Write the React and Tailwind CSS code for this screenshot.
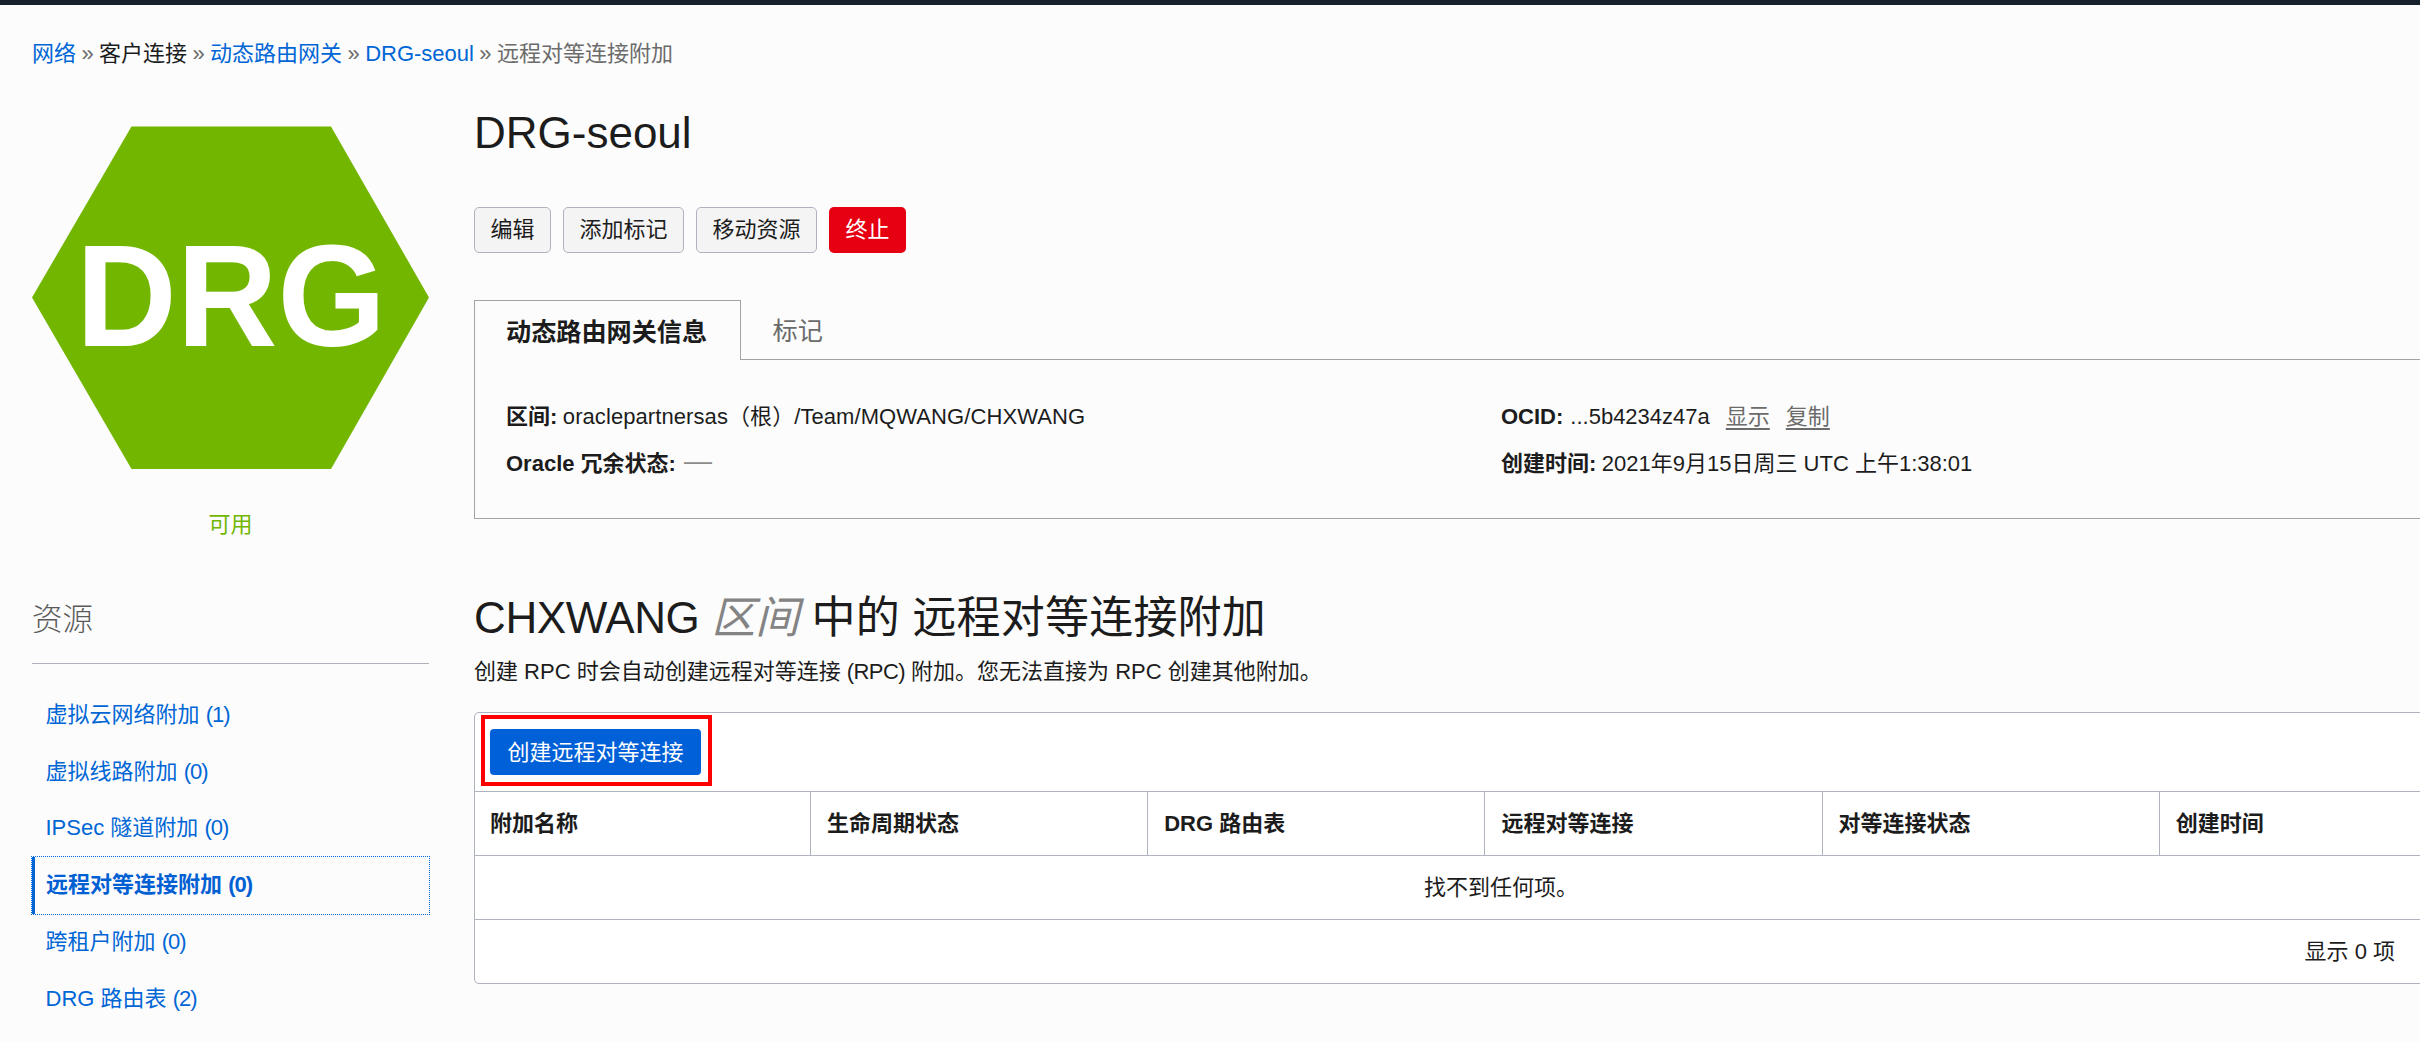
const RESOURCES = [
  { label: '虚拟云网络附加', count: 1 },
  { label: '虚拟线路附加', count: 0 },
  { label: 'IPSec 隧道附加', count: 0 },
  { label: '远程对等连接附加', count: 0, active: true },
  { label: '跨租户附加', count: 0 },
  { label: 'DRG 路由表', count: 2 },
];

const COLUMNS = ['附加名称', '生命周期状态', 'DRG 路由表', '远程对等连接', '对等连接状态', '创建时间'];

const ACTIONS = ['编辑', '添加标记', '移动资源'];

function Breadcrumb() {
  const sep = <span className="text-[#6b6b6b]">»</span>;
  return (
    <nav className="flex h-[34px] items-center gap-[5.4px] px-8 leading-[34px] whitespace-nowrap">
      <a className="text-[#0066d6]">网络</a>
      {sep}
      <span>客户连接</span>
      {sep}
      <a className="text-[#0066d6]">动态路由网关</a>
      {sep}
      <a className="text-[#0066d6]">DRG-seoul</a>
      {sep}
      <span className="text-[#6b6b6b]">远程对等连接附加</span>
    </nav>
  );
}

function ResourceLabel({ label, count }) {
  return (
    <span className="whitespace-pre">
      {label} <span className="tracking-[-1px]">({count})</span>
    </span>
  );
}

function Sidebar() {
  return (
    <aside className="w-[397px] shrink-0 pt-[55px]">
      <svg className="block" width="397" height="343" viewBox="0 0 397 343">
        <path d="M99.5 0.5H299L397 171.5L299 343H99.5L0 171.5Z" fill="#72b600" />
        <text
          x="44"
          y="220"
          fill="#fff"
          fontSize="144"
          fontWeight="700"
          textLength="310"
          lengthAdjust="spacingAndGlyphs"
          fontFamily="'Liberation Sans', Arial, sans-serif"
        >
          DRG
        </text>
      </svg>
      <div className="mt-[39px] text-center leading-[34px] text-[#72b600]">可用</div>
      <h2 className="mt-[56px] h-[66px] border-b border-[#aeb3bb] text-[30.5px] leading-[42px] font-light text-[#5a5a5a]">
        资源
      </h2>
      <ul className="mt-[22.5px]">
        {RESOURCES.map((r) =>
          r.active ? (
            <li
              key={r.label}
              className="-mx-px flex h-[59px] -my-px items-center border border-dotted border-[#0066d6]"
            >
              <span className="h-full w-[3px] bg-[#0066d6]" />
              <span className="pl-[11px] font-bold text-[#0060d3]">
                <ResourceLabel {...r} />
              </span>
            </li>
          ) : (
            <li key={r.label} className="flex h-[56.8px] items-center pl-[13.5px] text-[#0066d6]">
              <ResourceLabel {...r} />
            </li>
          ),
        )}
      </ul>
    </aside>
  );
}

function InfoPanel() {
  return (
    <section className="mt-[47px]">
      <div className="flex h-[60px] text-[25.15px] leading-[62px]">
        <div className="w-[267px] border-x border-t border-[#a3a3a3] pl-[31px] font-bold">动态路由网关信息</div>
        <div className="flex-1 border-b border-[#a3a3a3] pl-[31.5px] text-[#6b6b6b]">标记</div>
      </div>
      <div className="flex h-[159px] border-b border-l border-[#a3a3a3] pt-[33px] pl-[31px] leading-[47px]">
        <div className="w-[995px]">
          <div>
            <b>区间:</b>
            <span className="ml-[5.5px] tracking-[0.08px]">oraclepartnersas（根）/Team/MQWANG/CHXWANG</span>
          </div>
          <div className="flex">
            <b>Oracle 冗余状态:</b>
            <span className="relative -top-[3px] ml-[8px] text-[28px] text-[#8a8a8a]">—</span>
          </div>
        </div>
        <div>
          <div className="flex">
            <b>OCID:</b>
            <span className="ml-[7px]">...5b4234z47a</span>
            <span className="ml-4 text-[#6b6b6b] underline underline-offset-4">显示</span>
            <span className="ml-4 text-[#6b6b6b] underline underline-offset-4">复制</span>
          </div>
          <div>
            <b>创建时间:</b>
            <span className="ml-[5.5px]">2021年9月15日周三 UTC 上午1:38:01</span>
          </div>
        </div>
      </div>
    </section>
  );
}

function AttachmentsTable() {
  return (
    <div className="mt-[23px] w-[2025px] rounded-[5px] border border-[#aeb3bf] bg-white">
      <div className="flex h-[79px] items-start border-b border-[#aeb3bf] pt-[2px] pl-[6px]">
        <div className="flex h-[71px] w-[231px] items-start border-4 border-[#ff0000] pt-[10px] pl-[5px]">
          <button className="h-[46px] w-[211px] rounded-[4px] bg-[#0060d8] pt-px text-white">创建远程对等连接</button>
        </div>
      </div>
      <div className="flex h-[64px] border-b border-[#aeb3bf] font-bold">
        {COLUMNS.map((c) => (
          <div
            key={c}
            className="flex w-[337.2px] shrink-0 items-center border-r border-[#aeb3bf] pt-px pl-4 first:w-[336px] first:pl-[15px]"
          >
            {c}
          </div>
        ))}
      </div>
      <div className="flex h-[64px] items-center border-b border-[#aeb3bf] pt-px pl-[949px]">找不到任何项。</div>
      <div className="flex h-[63px] items-center justify-end pt-px pr-[103px]">显示 0 项</div>
    </div>
  );
}

export default function App() {
  return (
    <div className="h-[1042px] w-[2420px] overflow-hidden border-t-[5px] border-[#16212d] bg-[#fcfcfc] font-['Liberation_Sans','Noto_Sans_CJK_SC',sans-serif] text-[22px] leading-[34px] text-[#1c1c1c]">
      <div className="pt-[32px]">
        <Breadcrumb />
      </div>
      <div className="flex gap-[45px] pl-8">
        <Sidebar />
        <main className="w-[2026px] shrink-0 pt-[31px]">
          <h1 className="text-[44px] leading-[62px]">DRG-seoul</h1>
          <div className="mt-[43px] flex gap-[12px]">
            {ACTIONS.map((a) => (
              <button
                key={a}
                className="h-[46px] rounded-[5px] border border-[#aeb3bf] bg-[#f4f4f4] px-[15.5px] leading-[34px]"
              >
                {a}
              </button>
            ))}
            <button className="h-[46px] rounded-[5px] bg-[#e60012] px-[16.5px] text-white">终止</button>
          </div>
          <InfoPanel />
          <h2 className="mt-[66px] flex text-[44px] leading-[66px] whitespace-pre">
            <span className="tracking-[-0.4px]">CHXWANG </span>
            <span className="text-[#848484] italic">区间</span>
            <span className="tracking-[0.2px]"> 中的 远程对等连接附加</span>
          </h2>
          <p className="mt-[4px]">
            创建 RPC 时会自动创建远程对等连接 <span className="tracking-[-0.6px]">(RPC)</span> 附加。您无法直接为 RPC
            创建其他附加。
          </p>
          <AttachmentsTable />
        </main>
      </div>
    </div>
  );
}
